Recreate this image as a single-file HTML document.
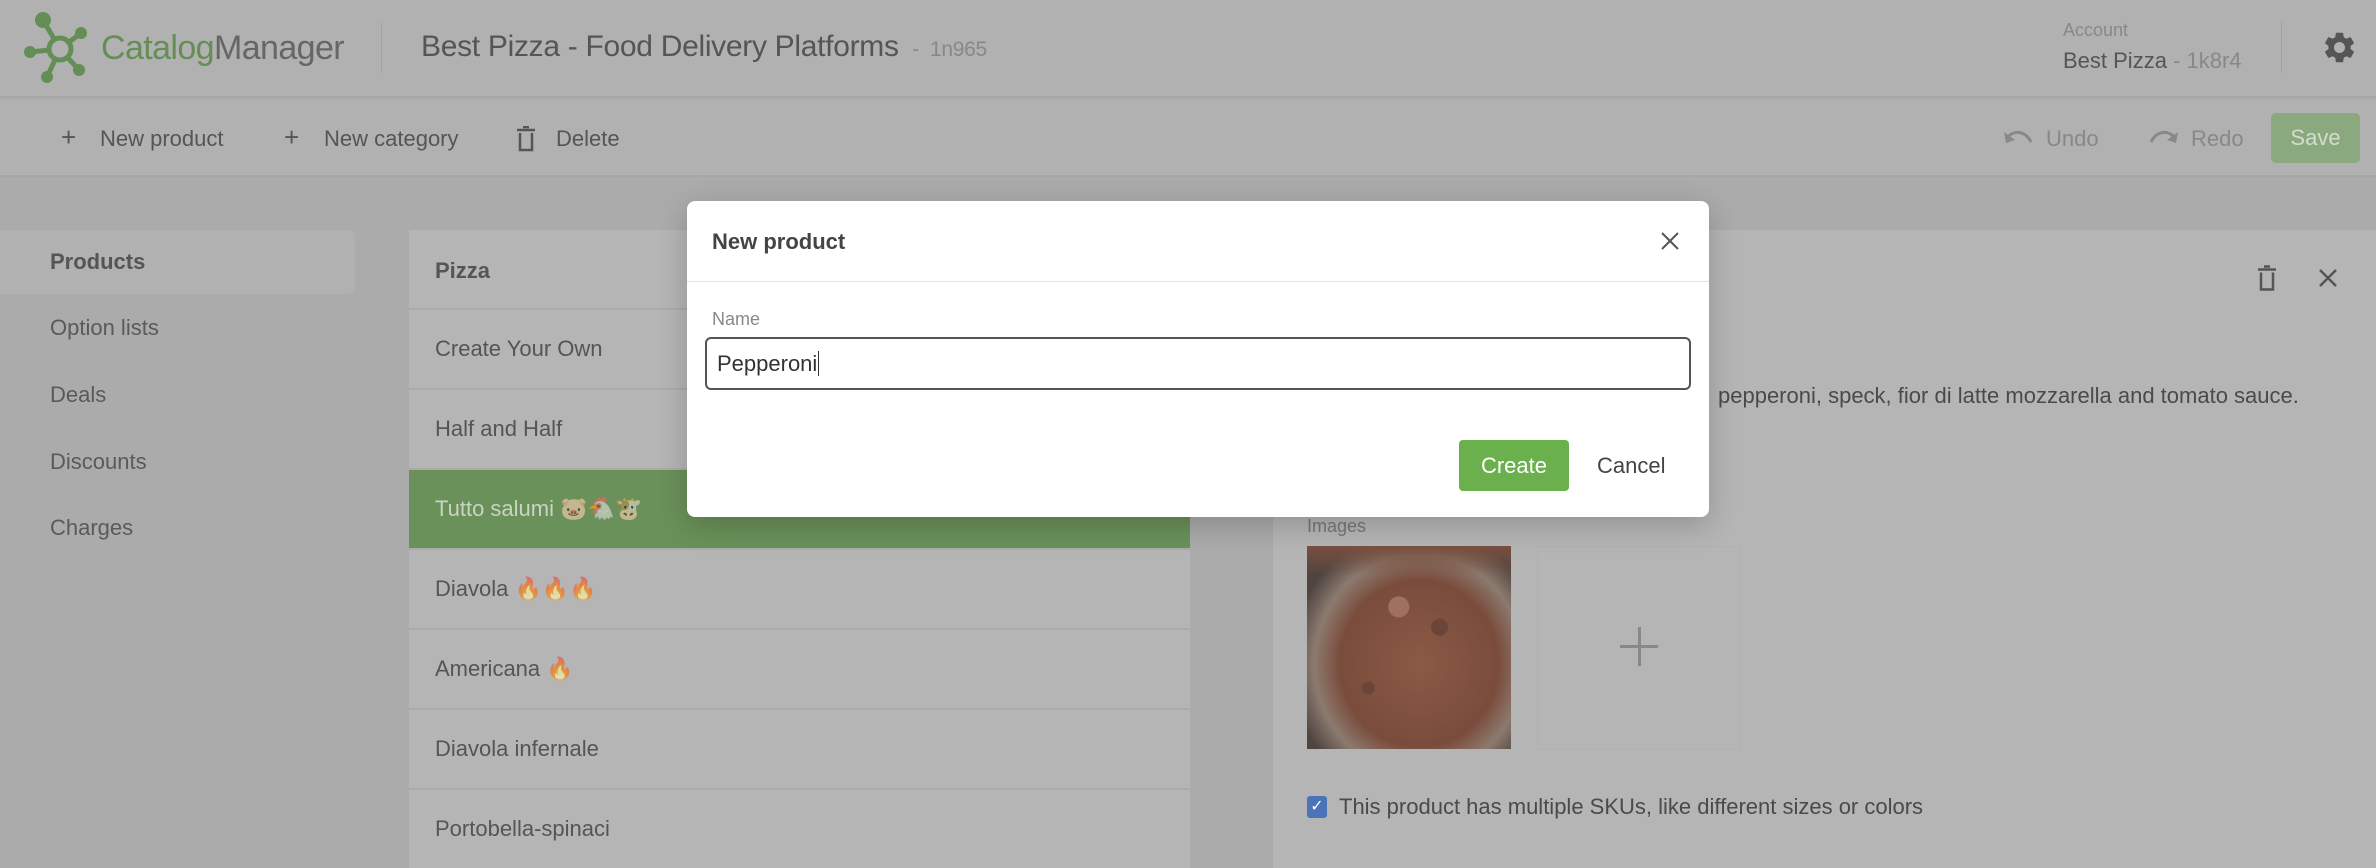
<!DOCTYPE html>
<html><head><meta charset="utf-8"><style>
*{margin:0;padding:0;box-sizing:border-box}
body{width:2376px;height:868px;overflow:hidden;background:#ababab;font-family:"Liberation Sans",sans-serif;position:relative;color:#555}
.a{position:absolute;white-space:nowrap}
.row{position:absolute;left:409px;width:781px;height:78px;background:#b5b5b5;font-size:22px;color:#555;padding-left:26px;line-height:78px}
.side{position:absolute;left:50px;font-size:22px;color:#5a5a5a}
</style></head><body>
<div class="a" style="left:0;top:0;width:2376px;height:98px;background:#b1b1b1;border-bottom:2px solid #a6a6a6"></div>
<div class="a" style="left:0;top:100px;width:2376px;height:77px;background:#b1b1b1;border-bottom:2px solid #a6a6a6"></div>
<svg class="a" style="left:0;top:0" width="100" height="100" viewBox="0 0 100 100">
<g stroke="#648e55" stroke-width="5" fill="#648e55">
<line x1="60" y1="49" x2="43" y2="20"/><line x1="60" y1="49" x2="81" y2="33"/><line x1="60" y1="49" x2="30" y2="52"/><line x1="60" y1="49" x2="47" y2="77"/><line x1="60" y1="49" x2="79" y2="70"/>
<circle cx="43" cy="20" r="8" stroke="none"/><circle cx="81" cy="33" r="6" stroke="none"/><circle cx="30" cy="52" r="6" stroke="none"/><circle cx="47" cy="77" r="6" stroke="none"/><circle cx="79" cy="70" r="6" stroke="none"/>
<circle cx="60" cy="49" r="11" fill="#b1b1b1"/></g></svg>
<div class="a" style="left:101px;top:29px;font-size:34px;letter-spacing:-0.6px"><span style="color:#648e55">Catalog</span><span style="color:#666">Manager</span></div>
<div class="a" style="left:381px;top:22px;width:1px;height:51px;background:#a3a3a3"></div>
<div class="a" style="left:421px;top:30px;font-size:30px;color:#555;letter-spacing:-0.3px">Best Pizza - Food Delivery Platforms <span style="font-size:21px;color:#888">&nbsp;- &nbsp;1n965</span></div>
<div class="a" style="left:2063px;top:20px;font-size:18px;color:#888">Account</div>
<div class="a" style="left:2063px;top:48px;font-size:22px;color:#555">Best Pizza <span style="color:#888">- 1k8r4</span></div>
<div class="a" style="left:2281px;top:22px;width:1px;height:51px;background:#a3a3a3"></div>
<svg class="a" style="left:2321px;top:29px" width="37" height="37" viewBox="0 0 24 24"><path fill="#555" d="M19.14 12.94c.04-.3.06-.61.06-.94 0-.32-.02-.64-.07-.94l2.030-1.58a.49.49 0 0 0 .12-.61l-1.92-3.32a.488.488 0 0 0-.59-.22l-2.39.96c-.5-.38-1.03-.7-1.62-.94l-.36-2.54a.484.484 0 0 0-.48-.41h-3.84c-.24 0-.43.17-.47.41l-.36 2.54c-.59.24-1.13.57-1.62.94l-2.39-.96c-.22-.08-.47 0-.59.22L2.74 8.87c-.12.21-.08.47.12.61l2.03 1.58c-.05.3-.09.63-.09.94s.02.64.07.94l-2.03 1.58a.49.49 0 0 0-.12.61l1.92 3.32c.12.22.37.29.59.22l2.39-.96c.5.38 1.03.7 1.62.94l.36 2.54c.05.24.24.41.48.41h3.84c.24 0 .44-.17.47-.41l.36-2.54c.59-.24 1.13-.56 1.62-.94l2.39.96c.22.08.47 0 .59-.22l1.92-3.32c.12-.22.07-.47-.12-.61l-2.01-1.58zM12 15.6c-1.98 0-3.6-1.62-3.6-3.6s1.62-3.6 3.6-3.6 3.6 1.62 3.6 3.6-1.62 3.6-3.6 3.6z"/></svg>
<div class="a" style="left:61px;top:124px;font-size:26px;color:#555;line-height:26px">+</div>
<div class="a" style="left:100px;top:126px;font-size:22px">New product</div>
<div class="a" style="left:284px;top:124px;font-size:26px;line-height:26px">+</div>
<div class="a" style="left:324px;top:126px;font-size:22px">New category</div>
<svg class="a" style="left:515px;top:126px" width="22" height="26" viewBox="0 0 22 26"><path d="M2 4h18M8 1h6M5 7v17h12V7" stroke="#555" stroke-width="2.5" fill="none"/></svg>
<div class="a" style="left:556px;top:126px;font-size:22px">Delete</div>
<svg class="a" style="left:2003px;top:128px" width="30" height="20" viewBox="0 0 30 20"><path d="M4 10 C10 2 22 2 28 14" stroke="#888" stroke-width="3" fill="none"/><path d="M1 4 L3 15 L12 12Z" fill="#888"/></svg>
<div class="a" style="left:2046px;top:126px;font-size:22px;color:#888">Undo</div>
<svg class="a" style="left:2149px;top:128px" width="30" height="20" viewBox="0 0 30 20"><path d="M26 10 C20 2 8 2 2 14" stroke="#888" stroke-width="3" fill="none"/><path d="M29 4 L27 15 L18 12Z" fill="#888"/></svg>
<div class="a" style="left:2191px;top:126px;font-size:22px;color:#888">Redo</div>
<div class="a" style="left:2271px;top:113px;width:89px;height:50px;background:#8aa97e;border-radius:5px;color:#d4dccf;font-size:22px;text-align:center;line-height:50px">Save</div>
<div class="a" style="left:0;top:230px;width:355px;height:64px;background:#b1b1b1;border-radius:0 6px 6px 0"></div>
<div class="side" style="top:249px;font-weight:bold;color:#555">Products</div>
<div class="side" style="top:315px">Option lists</div>
<div class="side" style="top:382px">Deals</div>
<div class="side" style="top:449px">Discounts</div>
<div class="side" style="top:515px">Charges</div>
<div class="row" style="top:230px;height:78px;font-weight:bold;line-height:82px">Pizza</div>
<div class="row" style="top:310px">Create Your Own</div>
<div class="row" style="top:390px">Half and Half</div>
<div class="row" style="top:470px;background:#6a9159;color:#c9d4c3">Tutto salumi <span style="opacity:.6">🐷🐔🐮</span></div>
<div class="row" style="top:550px">Diavola <span style="opacity:.6">🔥🔥🔥</span></div>
<div class="row" style="top:630px">Americana <span style="opacity:.6">🔥</span></div>
<div class="row" style="top:710px">Diavola infernale</div>
<div class="row" style="top:790px;height:78px">Portobella-spinaci</div>
<div class="a" style="left:1273px;top:230px;width:1103px;height:638px;background:#b5b5b5"></div>
<svg class="a" style="left:2256px;top:265px" width="22" height="27" viewBox="0 0 22 26"><path d="M2 4h18M8 1h6M5 7v17h12V7" stroke="#555" stroke-width="2.5" fill="none"/></svg>
<svg class="a" style="left:2318px;top:268px" width="20" height="20" viewBox="0 0 20 20"><path d="M2 2L18 18M18 2L2 18" stroke="#555" stroke-width="2.5"/></svg>
<div class="a" style="left:1718px;top:383px;font-size:22px;color:#4a4a4a">pepperoni, speck, fior di latte mozzarella and tomato sauce.</div>
<div class="a" style="left:1307px;top:516px;font-size:18px;color:#777">Images</div>
<div class="a" style="left:1307px;top:546px;width:204px;height:203px;background:radial-gradient(circle at 30% 70%,#6a4538 0 6px,transparent 7px),radial-gradient(circle at 65% 40%,#6a4538 0 8px,transparent 9px),radial-gradient(circle at 45% 30%,#a07060 0 10px,transparent 11px),radial-gradient(ellipse at 55% 58%,#8a5a45 0%,#7a4c3c 50%,#8c7a6e 66%,#4e4440 82%),#7a5a4c;"></div>
<div class="a" style="left:1307px;top:546px;width:204px;height:30px;background:linear-gradient(#7a5040,rgba(122,80,64,0))"></div>
<div class="a" style="left:1537px;top:546px;width:204px;height:204px;border:1px solid #b0b0b0"></div>
<div class="a" style="left:1620px;top:645px;width:38px;height:3px;background:#888"></div>
<div class="a" style="left:1638px;top:627px;width:3px;height:39px;background:#888"></div>
<div class="a" style="left:1307px;top:796px;width:20px;height:22px;background:#4a73b8;border-radius:3px;color:#fff;font-size:16px;text-align:center;line-height:22px">✓</div>
<div class="a" style="left:1339px;top:794px;font-size:22px;color:#4a4a4a">This product has multiple SKUs, like different sizes or colors</div>
<div class="a" style="left:687px;top:201px;width:1022px;height:316px;background:#fff;border-radius:8px;box-shadow:0 8px 30px rgba(0,0,0,0.2)">
<div class="a" style="left:25px;top:28px;font-size:22px;font-weight:bold;color:#444">New product</div>
<svg class="a" style="left:974px;top:31px" width="18" height="18" viewBox="0 0 18 18"><path d="M1 1L17 17M17 1L1 17" stroke="#555" stroke-width="2"/></svg>
<div class="a" style="left:0;top:80px;width:1022px;height:1px;background:#e3e3e3"></div>
<div class="a" style="left:25px;top:108px;font-size:18px;color:#888">Name</div>
<div class="a" style="left:18px;top:136px;width:986px;height:53px;border:2px solid #555;border-radius:6px;font-size:22px;color:#333;padding-left:10px;line-height:49px">Pepperoni<span style="border-left:1.5px solid #333;margin-left:1px"></span></div>
<div class="a" style="left:772px;top:239px;width:110px;height:51px;background:#6ab04c;border-radius:4px;color:#fff;font-size:22px;text-align:center;line-height:51px">Create</div>
<div class="a" style="left:910px;top:252px;font-size:22px;color:#444">Cancel</div>
</div>
</body></html>
